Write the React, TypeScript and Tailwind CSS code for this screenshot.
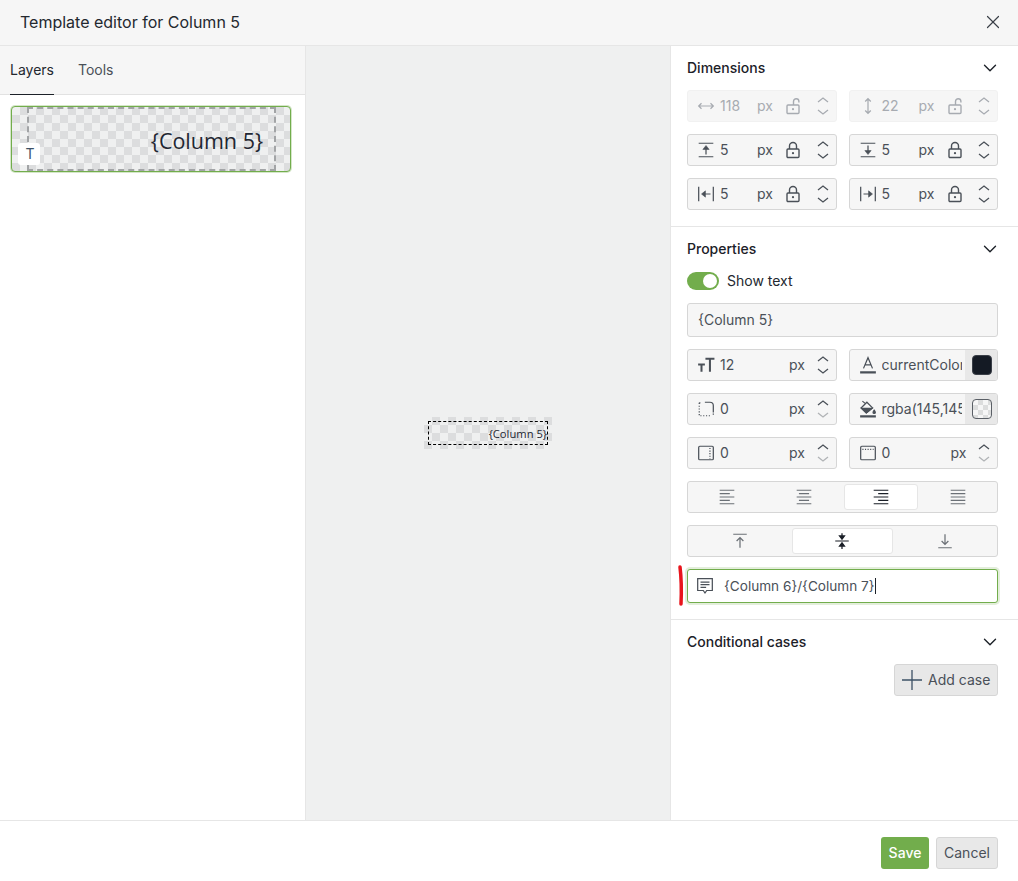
import React from 'react';
import { X, ChevronDown } from 'lucide-react';

type IconProps = { className?: string };

const svg = 'fill-none stroke-current';

const Glyphs: Record<string, React.ReactNode> = {
  width: <><path d="M1.500 8h13M4 5.500 1.500 8 4 10.500M12 5.500 14.500 8 12 10.500" /></>,
  height: <><path d="M8 1.500v13M5.500 4 8 1.500 10.500 4M5.500 12 8 14.500 10.500 12" /></>,
  top: <><path d="M1.500 14h13M1.500 2h13M8 12V6" /><path d="M5.200 7.500 8 4l2.800 3.500z" fill="currentColor" strokeWidth="0.500" /></>,
  bottom: <><path d="M1.500 14h13M1.500 2h13M8 4v6" /><path d="M5.200 8.500 8 12l2.800-3.500z" fill="currentColor" strokeWidth="0.500" /></>,
  left: <><path d="M1.500 1.500v13M14.500 1.500v13M12 8H6" /><path d="M7.500 5.200 4 8l3.500 2.800z" fill="currentColor" strokeWidth="0.500" /></>,
  right: <><path d="M1.500 1.500v13M14.500 1.500v13M4 8h6" /><path d="M8.500 5.200 12 8l-3.500 2.800z" fill="currentColor" strokeWidth="0.500" /></>,
  size: <><path d="M1 7.500h6M4 7.500V14M7.500 2.500h8M11.500 2.500V14" strokeWidth="1.800" /></>,
  radius: <><path d="M2 2.500V14h11" strokeDasharray="1 1.500" /><path d="M2 2.500h1.500" strokeDasharray="1 1.500" /><path d="M7 2h4.500a3 3 0 0 1 3 3v6" /><path d="M14.500 12v2" strokeDasharray="1 1" /></>,
  padRight: <><rect x="1.500" y="2" width="13" height="12" rx="1" /><path d="M11.500 3.500v9.500" strokeDasharray="1 1.300" /></>,
  padTop: <><rect x="1.500" y="2" width="13" height="12" rx="1" /><path d="M3 4.800h10" strokeDasharray="1 1.300" /></>,
  comment: <><path d="M1.500 1.500h13v10.500H9.500L8 14.200 6.500 12h-5z" /><path d="M4 4.500h8M4 6.800h8M4 9.200h5" /></>,
  fontColor: <><path d="M4 11 8 1.500 12 11M5.500 7.800h5" /><path d="M1 14.500h14" strokeWidth="2" /></>,
  fill: <><path d="M3 1l2.500 2" /><path d="M7 2 1.800 7.200 6.500 11.500 12 7z" /><path d="M2.500 7.500h9L6.500 11.500z" fill="currentColor" /><path d="M13.500 9c.8 1 1 1.500 1 2a1 1 0 0 1-2 0c0-.5.2-1 1-2z" fill="currentColor" /><path d="M1 14.500h14" strokeWidth="2" /></>,
  alignLeft: <><path d="M1.500 2h13M1.500 5h9M1.500 8h13M1.500 11h9M1.500 14h13" /></>,
  alignCenter: <><path d="M1.500 2h13M3.500 5h9M1.500 8h13M3.500 11h9M1.500 14h13" /></>,
  alignRight: <><path d="M1.500 2h13M5.500 5h9M1.500 8h13M5.500 11h9M1.500 14h13" /></>,
  alignJustify: <><path d="M1.500 2h13M1.500 5h13M1.500 8h13M1.500 11h13M1.500 14h13" /></>,
  vTop: <><path d="M2 2h12M8 14V5M5 8l3-3 3 3" /></>,
  vMiddle: <><path d="M2 8h12M8 1v5M8 15v-5" /><path d="M5.800 3.500 8 6.500l2.200-3zM5.800 12.500 8 9.500l2.200 3z" fill="currentColor" /></>,
  vBottom: <><path d="M2 14h12M8 2v9M5 8l3 3 3-3" /></>,
};

function Glyph({ name, className }: IconProps & { name: string }) {
  return (
    <svg viewBox="0 0 16 16" strokeWidth="1.100" className={`${svg} ${className ?? 'w-[18px] h-[18px]'}`}>
      {Glyphs[name]}
    </svg>
  );
}

function LockIcon({ open }: { open?: boolean }) {
  return (
    <svg viewBox="0 0 16 18" strokeWidth="1.400" className={`${svg} w-4 h-[18px]`}>
      <rect x="2" y="8" width="12" height="8.500" rx="1" />
      {open ? <path d="M8.500 8V4.500a2.700 2.700 0 0 1 5.400 0V5.500" /> : <path d="M4.500 8V5a3.500 3.500 0 0 1 7 0v3" />}
      <circle cx="8" cy="12.200" r="1.100" fill="currentColor" stroke="none" />
    </svg>
  );
}

function Spinner({ downDim }: { downDim?: boolean }) {
  return (
    <div className="flex flex-col items-center gap-1.5 w-4 ml-auto mr-[5px]">
      <svg viewBox="0 0 12 6" strokeWidth="1.300" className={`${svg} w-3 h-1.5`}><path d="M1 5 6 1l5 4" /></svg>
      <svg viewBox="0 0 12 6" strokeWidth="1.300" className={`${svg} w-3 h-1.5 ${downDim ? 'opacity-40' : ''}`}><path d="M1 1 6 5l5-4" /></svg>
    </div>
  );
}

function NumField({ icon, value, locked, disabled, downDim }: { icon: string; value: string; locked?: 'open' | 'closed'; disabled?: boolean; downDim?: boolean }) {
  return (
    <div className={`h-8 flex items-center rounded-[3px] border bg-[#f6f6f6] pl-[9px] ${disabled ? 'border-[#f1f1f1] text-[#a7abb1]' : 'border-[#d6d6d6] text-[#4a5058]'}`}>
      <Glyph name={icon} className="w-[18px] h-[18px] shrink-0" />
      <span className="ml-[5px] w-[37px]">{value}</span>
      {locked ? (
        <>
          <span className="w-[28px]">px</span>
          <LockIcon open={locked === 'open'} />
        </>
      ) : (
        <span className="ml-8">px</span>
      )}
      <Spinner downDim={downDim} />
    </div>
  );
}

function ColorField({ icon, value, swatch }: { icon: string; value: string; swatch: 'dark' | 'clear' }) {
  return (
    <div className="h-8 flex items-center rounded-[3px] border border-[#d6d6d6] bg-[#f6f6f6] pl-[9px] text-[#4a5058] overflow-hidden">
      <Glyph name={icon} className="w-[18px] h-[18px] shrink-0" />
      <span className="ml-[5px] w-20 overflow-hidden whitespace-nowrap">{value}</span>
      <div className="ml-auto h-full w-8 bg-[#e8e8e8] flex items-center justify-end pr-[5px]">
        {swatch === 'dark' ? (
          <div className="w-5 h-5 rounded-[4px] bg-[#141a24] border border-[#3a3f48]" />
        ) : (
          <div className="w-5 h-5 rounded-[4px] border border-[#5a5f66] bg-[repeating-conic-gradient(#dcdddd_0_25%,#f6f6f6_0_50%)] bg-[length:10px_10px]" />
        )}
      </div>
    </div>
  );
}

function Segments({ items, active, cols }: { items: string[]; active: number; cols: string }) {
  return (
    <div className={`h-8 grid ${cols} gap-0.5 p-[2px] rounded-[3px] border border-[#d6d6d6] bg-[#f6f6f6]`}>
      {items.map((name, i) => (
        <div key={name} className={`flex items-center justify-center rounded-[3px] ${i === active ? 'bg-white border border-[#e6e6e6] text-[#1a1f27]' : 'text-[#6b7076]'}`}>
          <Glyph name={name} className="w-[18px] h-[18px]" />
        </div>
      ))}
    </div>
  );
}

function SectionTitle({ children }: { children: React.ReactNode }) {
  return (
    <div className="h-5 flex items-center justify-between font-medium text-[#1c2128]">
      <span>{children}</span>
      <ChevronDown className="w-[22px] h-[22px] -mr-[3px]" strokeWidth={1.5} />
    </div>
  );
}

export default function App() {
  return (
    <div className="h-screen w-full flex flex-col bg-white text-sm overflow-hidden font-['Inter',sans-serif]">
      {/* Header */}
      <div className="h-[46px] shrink-0 flex items-center justify-between pl-5 pr-[14px] pb-[2px] bg-[#f6f6f6] border-b border-[#e6e6e6]">
        <span className="text-base text-[#23282f]">Template editor for Column 5</span>
        <X className="w-[22px] h-[22px] text-[#3a4048]" strokeWidth={1.3} />
      </div>

      <div className="flex-1 flex min-h-0">
        {/* Layers */}
        <div className="w-[306px] shrink-0 border-r border-[#e6e6e6] flex flex-col">
          <div className="h-[49px] shrink-0 flex gap-6 px-[10px] bg-[#f6f6f6] border-b border-[#e2e2e2]">
            <div className="h-[49px] pb-px flex items-center border-b border-[#1c2128] text-[#23282f]">Layers</div>
            <div className="h-[49px] pb-px flex items-center text-[#4a5058]">Tools</div>
          </div>
          <div className="relative mt-[11px] ml-[11px] w-[280px] h-[66px] rounded-[4px] border-[1.5px] border-[#72ad4c] ring-1 ring-[#d5e6c9] bg-[#eff0f0] bg-[repeating-conic-gradient(#dcddde_0_25%,transparent_0_50%)] bg-[length:16px_16px] overflow-hidden">
            <div className="absolute left-[15px] right-[14px] top-0 bottom-0 border-2 border-dashed border-[#a2a4a6] flex items-center justify-end pr-[11px] pt-1 font-['Open_Sans',sans-serif] text-[21.500px] text-[#1f2732]">
              {'{Column 5}'}
            </div>
            <div className="absolute left-[6px] bottom-[6px] w-[22px] h-[22px] rounded-[3px] bg-white flex items-center justify-center text-sm text-[#3d5166]">
              <span className="ml-0.5">T</span>
            </div>
          </div>
        </div>

        {/* Canvas */}
        <div className="w-[365px] shrink-0 bg-[#eff0f0] border-r border-[#e6e6e6] flex items-center justify-center">
          <div className="relative w-32 h-8 bg-[repeating-conic-gradient(#dcddde_0_25%,transparent_0_50%)] bg-[length:16px_16px]">
            <div className="absolute inset-x-1 inset-y-1 border border-dashed border-black flex items-center justify-end pt-[2px] font-['Open_Sans',sans-serif] text-[11.200px] text-[#1f2732] whitespace-nowrap">
              {'{Column 5}'}
            </div>
          </div>
        </div>

        {/* Settings */}
        <div className="relative flex-1 flex flex-col min-w-0">
          <div className="flex flex-col gap-3 pt-3 pb-4 pl-4 pr-5 border-b border-[#e6e6e6]">
            <SectionTitle>Dimensions</SectionTitle>
            <div className="grid grid-cols-2 gap-3">
              <NumField icon="width" value="118" locked="open" disabled />
              <NumField icon="height" value="22" locked="open" disabled />
              <NumField icon="top" value="5" locked="closed" />
              <NumField icon="bottom" value="5" locked="closed" />
              <NumField icon="left" value="5" locked="closed" />
              <NumField icon="right" value="5" locked="closed" />
            </div>
          </div>

          <div className="flex flex-col gap-3 pt-3 pb-4 pl-4 pr-5 border-b border-[#e6e6e6]">
            <SectionTitle>Properties</SectionTitle>
            <div className="h-5 flex items-center gap-2 text-[#23282f]">
              <div className="w-8 h-[18px] rounded-full bg-[#72ad4c] flex items-center justify-end pr-[2px]">
                <div className="w-[14px] h-[14px] rounded-full bg-white" />
              </div>
              <span>Show text</span>
            </div>
            <div className="h-[34px] flex items-center px-[10px] rounded-[3px] border border-[#d6d6d6] bg-[#f6f6f6] text-[#4a5058]">{'{Column 5}'}</div>
            <div className="grid grid-cols-2 gap-3">
              <NumField icon="size" value="12" />
              <ColorField icon="fontColor" value="currentColor" swatch="dark" />
              <NumField icon="radius" value="0" downDim />
              <ColorField icon="fill" value="rgba(145,145,145,0)" swatch="clear" />
              <NumField icon="padRight" value="0" downDim />
              <NumField icon="padTop" value="0" downDim />
            </div>
            <Segments items={['alignLeft', 'alignCenter', 'alignRight', 'alignJustify']} active={2} cols="grid-cols-4" />
            <Segments items={['vTop', 'vMiddle', 'vBottom']} active={1} cols="grid-cols-3" />
            <div className="h-[34px] flex items-center pl-2 rounded-[3px] border border-[#72ad4c] ring-2 ring-[#e3eedb] bg-white text-[13.600px] text-[#4a5058]">
              <Glyph name="comment" className="w-[18px] h-[18px] shrink-0" />
              <span className="ml-[10px] pt-px">{'{Column 6}/{Column 7}'}</span>
              <span className="w-px h-4 bg-[#1c2128]" />
            </div>
          </div>

          <div className="flex flex-col gap-3 pt-3 pl-4 pr-5">
            <SectionTitle>Conditional cases</SectionTitle>
            <div className="flex justify-end">
              <div className="h-8 w-[104px] flex items-center gap-[6px] pl-[7px] rounded-[3px] border border-[#d6d6d6] bg-[#e8e8e8] text-[#4a5058]">
                <svg viewBox="0 0 20 20" strokeWidth="1.300" className="w-5 h-5 fill-none stroke-[#3d5166]">
                  <path d="M0 10h20M10 0v20" />
                </svg>
                <span>Add case</span>
              </div>
            </div>
          </div>

          {/* red annotation over the text field */}
          <svg viewBox="0 0 8 44" className="absolute left-[6px] top-[518px] w-2 h-11 fill-none stroke-[#e8141c]" strokeWidth="3.500" strokeLinecap="round">
            <path d="M3 3c1.500 12 1.500 26 1 37" />
          </svg>
        </div>
      </div>

      {/* Footer */}
      <div className="h-[61px] shrink-0 border-t border-[#e6e6e6] flex items-start justify-end gap-[7px] pt-4 pr-5">
        <div className="h-8 w-12 rounded-[3px] bg-[#72ad4c] text-white font-medium flex items-center justify-center">Save</div>
        <div className="h-8 w-[62px] rounded-[3px] border border-[#d6d6d6] bg-[#e8e8e8] text-[#4a5058] flex items-center justify-center">Cancel</div>
      </div>
    </div>
  );
}
